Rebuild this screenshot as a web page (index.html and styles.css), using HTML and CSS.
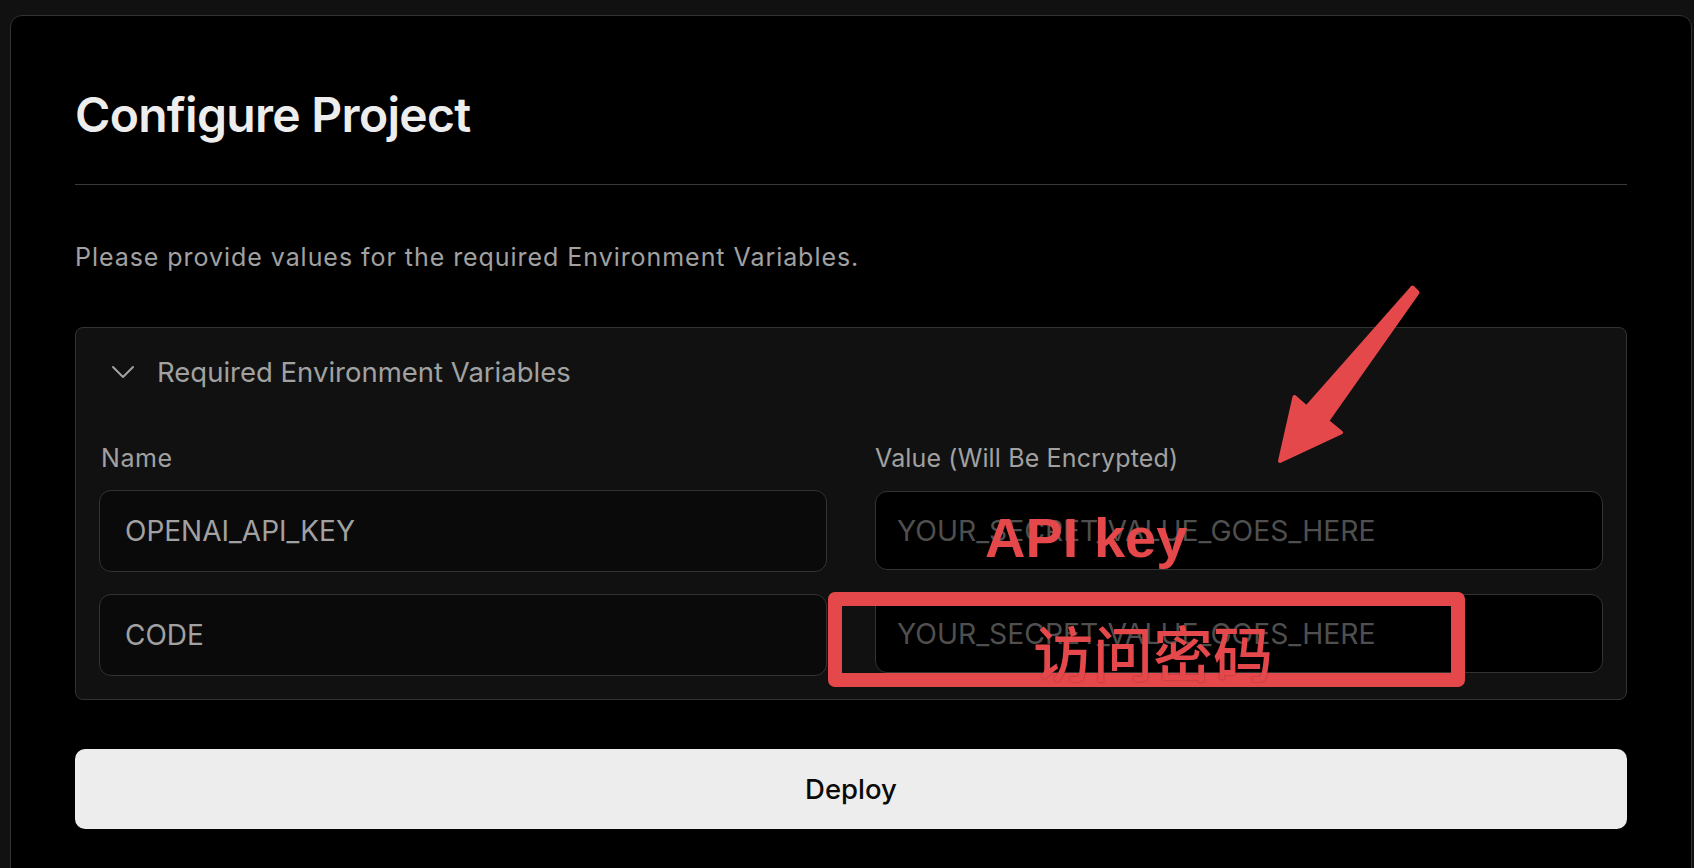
FILE: index.html
```html
<!DOCTYPE html>
<html lang="en">
<head>
<meta charset="utf-8">
<title>Configure Project</title>
<link rel="stylesheet" href="styles.css">
</head>
<body>
<div class="page">
  <section class="card">
    <h1 class="title">Configure Project</h1>
    <hr class="divider">
    <p class="desc">Please provide values for the required Environment Variables.</p>
    <div class="envbox">
      <div class="env-head">
        <svg class="chev" width="24" height="14" viewBox="0 0 24 14" aria-hidden="true">
          <polyline points="2,2 12,12 22,2" fill="none" stroke="#a1a1a1" stroke-width="2" stroke-linecap="round" stroke-linejoin="round"/>
        </svg>
        <span class="env-title">Required Environment Variables</span>
      </div>
      <div class="env-grid">
        <div class="col">
          <div class="lbl lbl-name">Name</div>
          <div class="inp inp-name">OPENAI_API_KEY</div>
          <div class="inp inp-name">CODE</div>
        </div>
        <div class="col">
          <div class="lbl">Value (Will Be Encrypted)</div>
          <div class="inp inp-val">YOUR_SECRET_VALUE_GOES_HERE</div>
          <div class="inp inp-val">YOUR_SECRET_VALUE_GOES_HERE</div>
        </div>
      </div>
    </div>
    <button class="deploy">Deploy</button>
  </section>

  <svg class="arrow" width="1694" height="868" viewBox="0 0 1694 868" aria-hidden="true">
    <polygon points="1412.5,287.5 1417.5,292.5 1327,421 1341,432.5 1280,461 1294.5,397 1306.5,407.5" fill="#e5484b" stroke="#e5484b" stroke-width="4" stroke-linejoin="round"/>
  </svg>
  <div class="mark-box"></div>
  <div class="mark-text mark-api">API key</div>
  <div class="mark-text mark-code">访问密码</div>
</div>
</body>
</html>
```
FILE: styles.css
```css
html, body {
  margin: 0;
  padding: 0;
  background: #111111;
  overflow: hidden;
  height: 100%;
}

.page {
  position: relative;
  padding: 15px 2px 0 10px;
  font-family: "Inter", "Liberation Sans", sans-serif;
}

.card {
  background: #000000;
  border: 1px solid #333333;
  border-radius: 12px;
  padding: 70px 64px 80px 64px;
  display: flex;
  flex-direction: column;
}

.title {
  margin: 0;
  font-size: 48px;
  line-height: 58px;
  font-weight: 600;
  color: #ededed;
  letter-spacing: -0.7px;
}

.divider {
  margin: 40px 0 0 0;
  border: 0;
  height: 1px;
  background: #3a3a3a;
}

.desc {
  margin: 56px 0 0 0;
  font-size: 25px;
  line-height: 32px;
  color: #a1a1a1;
  letter-spacing: 0.95px;
}

.envbox {
  margin-top: 54px;
  background: #111111;
  border: 1px solid #333333;
  border-radius: 8px;
  padding: 0 23px 23px 23px;
}

.env-head {
  height: 88px;
  display: flex;
  align-items: center;
  padding-left: 12px;
}

.chev {
  display: block;
}

.env-title {
  margin-left: 22px;
  font-size: 27.5px;
  color: #a1a1a1;
}

.env-grid {
  margin-top: 26px;
  display: grid;
  grid-template-columns: 1fr 1fr;
  column-gap: 48px;
}

.col {
  display: flex;
  flex-direction: column;
}

.lbl {
  font-size: 25px;
  line-height: 32px;
  color: #a1a1a1;
  margin-bottom: 16px;
  letter-spacing: 0.15px;
}

.lbl-name {
  padding-left: 2px;
  letter-spacing: 0.6px;
}

.inp {
  box-sizing: border-box;
  height: 82px;
  border: 1px solid #333333;
  border-radius: 12px;
  display: flex;
  align-items: center;
  padding-left: 25px;
  font-size: 28px;
}

.inp + .inp {
  margin-top: 22px;
}

.inp-name {
  background: #0a0a0a;
  color: #a1a1a1;
}

.inp-val {
  background: #000000;
  color: #4f4f4f;
  height: 79px;
  margin-top: 1px;
  padding-left: 21px;
  font-size: 28.3px;
}

.inp-val + .inp-val {
  margin-top: 24px;
}

.deploy {
  margin-top: 49px;
  height: 80px;
  border: 0;
  border-radius: 10px;
  background: #ededed;
  color: #0a0a0a;
  font-family: "Inter", "Liberation Sans", sans-serif;
  font-size: 27.5px;
  font-weight: 500;
}

/* annotations drawn over the screenshot */
.arrow {
  position: absolute;
  left: 0;
  top: 0;
  pointer-events: none;
}

.mark-box {
  position: absolute;
  left: 828px;
  top: 592px;
  width: 637px;
  height: 95px;
  box-sizing: border-box;
  border: 14px solid #e5484b;
  border-radius: 7px;
}

.mark-text {
  position: absolute;
  color: #e5484b;
  line-height: 1;
  white-space: nowrap;
}

.mark-api {
  left: 985px;
  top: 510px;
  font-family: "Liberation Sans", Arial, sans-serif;
  font-weight: 700;
  font-size: 56px;
}

.mark-code {
  left: 1033px;
  top: 621px;
  font-family: "Noto Sans CJK SC", "Noto Sans", sans-serif;
  font-weight: 500;
  font-size: 60px;
  text-shadow: 0 0 2px rgba(0, 0, 0, 0.35);
}
```
